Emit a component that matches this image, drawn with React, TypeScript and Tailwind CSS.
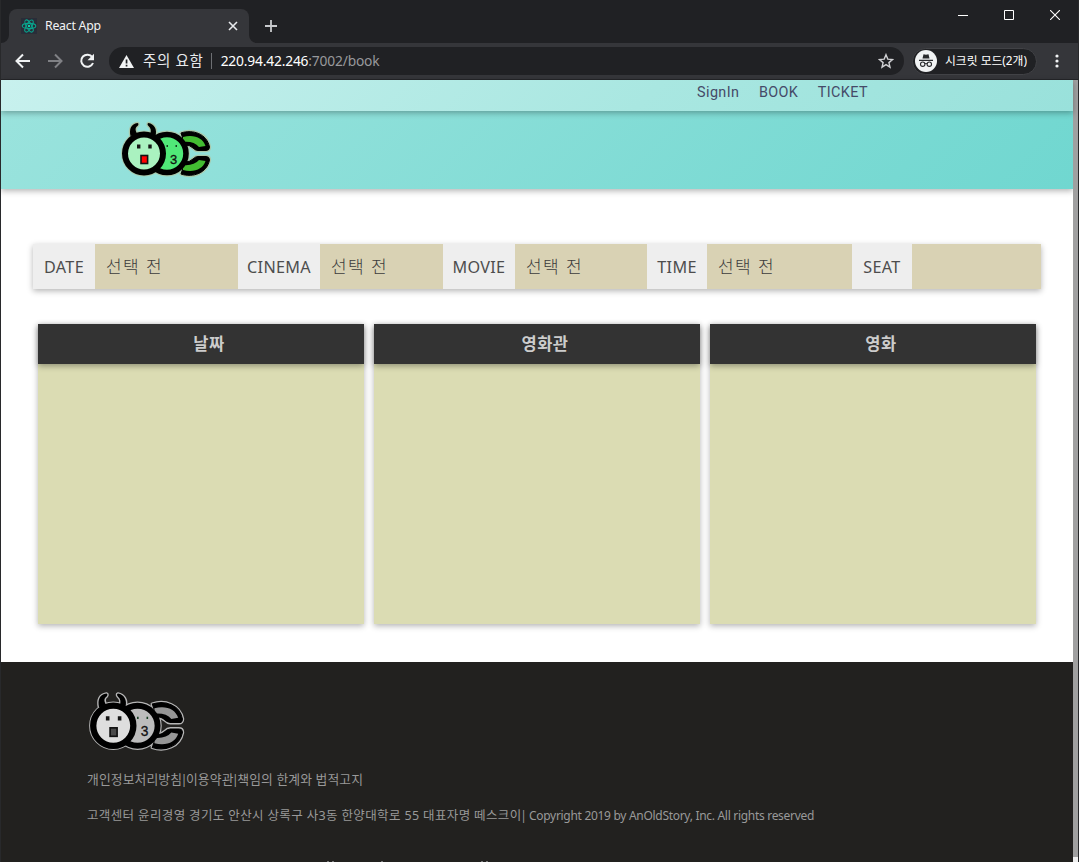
import React from "react";

const KR = "font-['Noto_Sans','Noto_Sans_CJK_KR',sans-serif]";

function Logo({ mono = false, className }: { mono?: boolean; className: string }) {
  const face = mono ? "#dedede" : "#aaf2c0";
  const body = mono ? "#bcbcbc" : "#50e878";
  const tail = mono ? "#969696" : "#43bd32";
  const mouth = mono ? "#4a4a4a" : "#ff0000";
  const glow = mono ? "#b5b5b5" : "#a9c9ac";
  const horns = "M9.500 15C8 8 10 3 16.500 2C18 2.500 17.500 4 16.500 5C13.500 7 14.500 10 16.500 13.500zM34.500 15C36.500 8 33 3 27.500 2C26 2.500 26.500 4 27.500 5C30 7 30.500 10 29 13.500z";
  const claws = "M60 12C72 8 86 13 88.500 26Q88.500 29.500 85 29.500H77Q74.500 29.500 72 27Q69 24 64 24zM60 53C72 57 86 52 88.500 39Q88.500 35.500 85 35.500H77Q74.500 35.500 72 38Q69 41 64 41z";
  return (
    <svg viewBox="0 0 90 56" className={className} fill="none">
      <g stroke={glow} strokeLinecap="round" strokeLinejoin="round">
        <path d={horns} strokeWidth="2.600" />
        <path d={claws} strokeWidth="3.400" />
        <circle cx="46" cy="32.500" r="21.600" strokeWidth="2.600" />
        <circle cx="23" cy="32.500" r="21.600" strokeWidth="2.600" />
      </g>
      <path d={horns} fill="#000" />
      <path d={claws} fill="#000" stroke="#000" />
      <path d="M62 16C73 13 82 17 84.500 25L78 26Q73 20 62 21zM62 49C73 52 82 48 84.500 40L78 39Q73 45 62 44z" fill={tail} />
      <circle cx="46" cy="32.500" r="19" fill={body} stroke="#000" strokeWidth="5.600" />
      <circle cx="23" cy="32.500" r="19" fill={face} stroke="#000" strokeWidth="6" />
      <path d="M16 23.500h3.400v4H16zM27.300 23.500h3.400v4h-3.400z" fill="#151515" />
      <path d="M45.500 24h1.500v2h-1.500zM54.500 24h1.500v2h-1.500z" fill="#173f22" />
      <rect x="20" y="34.500" width="6.600" height="8" fill={mouth} stroke="#111" strokeWidth="1.600" />
      <text x="49" y="42.500" fontSize="13" fill="#111" stroke="#111" strokeWidth=".3" fontFamily="Liberation Sans, sans-serif">3</text>
    </svg>
  );
}

function ReactMark() {
  return (
    <svg viewBox="0 0 16 16" className="h-4 w-4 bg-[#292d38]" fill="none" stroke="#09a58d" strokeWidth="1.1">
      <ellipse cx="8" cy="8" rx="6.8" ry="2.6" />
      <ellipse cx="8" cy="8" rx="6.8" ry="2.6" transform="rotate(60 8 8)" />
      <ellipse cx="8" cy="8" rx="6.8" ry="2.6" transform="rotate(120 8 8)" />
      <circle cx="8" cy="8" r="1.2" fill="#10d0ae" stroke="none" />
    </svg>
  );
}

function TabStrip() {
  return (
    <div className="flex h-[43px] items-end bg-[#202124]">
      <div className="flex h-[34px] w-[248px] items-end">
        <svg viewBox="0 0 8 8" className="h-2 w-2 shrink-0"><path d="M8 0v8H0A8 8 0 0 0 8 0" fill="#35363a" /></svg>
        <div className="flex h-[34px] w-[240px] items-center rounded-t-lg bg-[#35363a] pl-3">
          <ReactMark />
          <span className="ml-2 text-[12.3px] tracking-[-0.25px] text-[#f1f3f4]">React App</span>
          <svg viewBox="0 0 10 10" className="mr-[11px] ml-auto h-[10px] w-[10px]" stroke="#e8eaed" strokeWidth="1.6"><path d="M1 1l8 8M9 1L1 9" /></svg>
        </div>
      </div>
      <svg viewBox="0 0 8 8" className="h-2 w-2 shrink-0"><path d="M0 0v8h8A8 8 0 0 1 0 0" fill="#35363a" /></svg>
      <svg viewBox="0 0 12 12" className="mb-[11px] ml-2 h-3 w-3" stroke="#c8cacd" strokeWidth="1.8"><path d="M6 0v12M0 6h12" /></svg>
      <div className="mr-[18px] mb-[23px] ml-auto flex items-center gap-[36px]">
        <svg viewBox="0 0 10 10" className="h-[10px] w-[10px]" stroke="#fff"><path d="M0 5.5h10" /></svg>
        <svg viewBox="0 0 10 10" className="h-[10px] w-[10px]" stroke="#fff" fill="none"><path d="M.5.5h9v9h-9z" /></svg>
        <svg viewBox="0 0 10 10" className="h-[10px] w-[10px]" stroke="#fff" strokeWidth="1.1"><path d="M0 0l10 10M10 0L0 10" /></svg>
      </div>
    </div>
  );
}

function Toolbar() {
  return (
    <div className="flex h-[37px] items-center border-b border-[#252629] bg-[#35363a] pl-[14px]">
      <svg viewBox="0 0 16 16" className="h-4 w-4" fill="none" stroke="#f1f3f4" strokeWidth="2"><path d="M15 8H2M8 1.5L1.5 8L8 14.500" /></svg>
      <svg viewBox="0 0 16 16" className="ml-4 h-4 w-4" fill="none" stroke="#808185" strokeWidth="2"><path d="M1 8h13M8 1.500L14.500 8L8 14.500" /></svg>
      <svg viewBox="0 0 16 16" className="ml-4 h-4 w-4" fill="none" stroke="#f1f3f4" strokeWidth="2"><path d="M13.300 4.200A6.100 6.100 0 1 0 14 10" /><path d="M15 .7v6.500H8.500z" fill="#f1f3f4" stroke="none" /></svg>
      <div className="ml-[14px] flex h-7 w-[795px] items-center rounded-full bg-[#202124] pl-[10px]">
        <svg viewBox="0 0 15 13" className="h-[13px] w-[15px]"><path d="M7.500 0L15 13H0z" fill="#f1f3f4" /><path d="M6.700 4.500h1.700v4H6.700zM6.700 9.700h1.700v1.700H6.700z" fill="#202124" /></svg>
        <span className="ml-[9px] text-[14.500px] tracking-[0.7px] whitespace-nowrap text-[#e8eaed]">주의 요함</span>
        <span className="mr-[9px] ml-[7px] h-4 w-px bg-[#6d6f73]" />
        <span className="text-[13.800px] tracking-[-0.18px] text-[#98999c]"><span className="text-white">220.94.42.246</span>:7002/book</span>
        <svg viewBox="0 0 16 16" className="mr-[10px] ml-auto h-4 w-4" fill="none" stroke="#d0d1d4" strokeWidth="1.400"><path d="M8 1.700l1.800 4.400 4.700.4-3.600 3.100 1.100 4.600L8 11.700l-4 2.500 1.100-4.600-3.600-3.100 4.700-.4z" /></svg>
      </div>
      <div className="ml-[8px] flex h-[27px] w-[125px] items-center rounded-full border border-[#414246] bg-[#202124] pl-[2px]">
        <svg viewBox="0 0 22 22" className="h-[22px] w-[22px] shrink-0">
          <circle cx="11" cy="11" r="11" fill="#f1f3f4" />
          <path d="M7.500 8.500L8.500 4.300L11 4.800L13.500 4.300L14.500 8.500zM4 9.800h14v1.200H4z" fill="#292a2d" />
          <g fill="none" stroke="#292a2d" strokeWidth="1.100"><circle cx="7.700" cy="14.200" r="2.200" /><circle cx="14.300" cy="14.200" r="2.200" /><path d="M9.900 14c.6-.7 1.600-.7 2.200 0" /></g>
        </svg>
        <span className="ml-2 text-[11.800px] whitespace-nowrap text-white">시크릿 모드(2개)</span>
      </div>
      <svg viewBox="0 0 4 14" className="ml-[18px] h-[14px] w-1" fill="#f1f3f4"><circle cx="2" cy="2" r="1.600" /><circle cx="2" cy="7" r="1.600" /><circle cx="2" cy="12" r="1.600" /></svg>
    </div>
  );
}

function Selection() {
  const label = "flex shrink-0 items-center justify-center bg-[#eee] pt-0.5";
  const value = "flex shrink-0 items-center bg-[#d9d2b4] pt-px pl-[11px] text-[17px] font-light tracking-[1.400px] text-[#3c3c3c]";
  return (
    <div className="mx-8 mt-[55px] flex h-[45px] w-[1008px] text-[16.200px] tracking-[0.3px] text-[#4d4d4d] shadow-[0_2px_6px_rgba(0,0,0,0.3)]">
      <div className={label + " w-[62px]"}>DATE</div>
      <div className={value + " w-[143px]"}>선택 전</div>
      <div className={label + " w-[82px]"}>CINEMA</div>
      <div className={value + " w-[123px]"}>선택 전</div>
      <div className={label + " w-[72px]"}>MOVIE</div>
      <div className={value + " w-[132px]"}>선택 전</div>
      <div className={label + " w-[60px]"}>TIME</div>
      <div className={value + " w-[145px]"}>선택 전</div>
      <div className={label + " w-[60px]"}>SEAT</div>
      <div className={value + " w-[129px]"} />
    </div>
  );
}

function Panel({ title }: { title: string }) {
  return (
    <section className="h-[300px] w-[326px] bg-[#dbdcb3] shadow-[0_2px_6px_rgba(0,0,0,0.3)]">
      <h2 className="flex h-10 items-center justify-center bg-[#333] pt-px pl-[16px] text-[16.500px] font-bold tracking-[0.5px] text-[#ccc] shadow-[0_2px_6px_rgba(0,0,0,0.35)]">{title}</h2>
    </section>
  );
}

function Bar() {
  return <span className="mx-[-1.700px]">|</span>;
}

export default function App() {
  return (
    <div className={`${KR} flex h-[862px] w-[1079px] flex-col overflow-hidden border-x border-[#28292b] bg-[#202124]`}>
      <TabStrip />
      <Toolbar />
      <div className="flex min-h-0 flex-1">
        <main className="flex w-[1072px] flex-col bg-white">
          <nav className="z-10 flex h-[31px] shrink-0 justify-end gap-[19.500px] bg-[linear-gradient(135deg,#c8f1ee,#a9e7e1_60%,#99e1db)] pt-px pr-[205px] font-['Roboto','Noto_Sans',sans-serif] text-[14.400px] leading-6 tracking-[0.400px] text-[#454a68] shadow-[0_2px_6px_rgba(0,0,0,0.3)]">
            <span>SignIn</span><span>BOOK</span><span>TICKET</span>
          </nav>
          <header className="h-[78px] shrink-0 bg-[linear-gradient(135deg,#9ae3dd,#70d7d0)] pt-[10px] pl-[120px] shadow-[0_2px_6px_rgba(0,0,0,0.3)]">
            <Logo className="h-[56px] w-[90px] overflow-visible" />
          </header>
          <Selection />
          <div className="mt-[35px] flex gap-[10px] pl-[37px]">
            <Panel title="날짜" />
            <Panel title="영화관" />
            <Panel title="영화" />
          </div>
          <footer className="mt-[38px] flex h-[200px] shrink-0 flex-col overflow-hidden bg-[#22211f] pt-[29px] pl-[86px] text-[#999]">
            <Logo mono className="ml-[2px] h-[60px] w-[95px] overflow-visible" />
            <p className="mt-[18px] text-[12.800px] leading-5 tracking-[0.12px]">개인정보처리방침<Bar />이용약관<Bar />책임의 한계와 법적고지</p>
            <p className="mt-[17px] flex text-[12.500px] leading-5 whitespace-nowrap">
              <span className="w-[435px] tracking-[0.360px]">고객센터 윤리경영 경기도 안산시 상록구 사3동 한양대학로 55 대표자명 떼스크이</span>
              <span className="w-[7px] text-[12px]"><Bar /></span>
              <span className="text-[12px] tracking-[-0.3px]">Copyright 2019 by AnOldStory, Inc. All rights reserved</span>
            </p>
            <div className="mt-auto ml-[240px] flex h-px shrink-0">
              <i className="w-[2px] bg-[#777]" />
              <i className="ml-[3px] w-[2px] bg-[#777]" />
              <i className="ml-[47px] w-[2px] bg-[#777]" />
              <i className="ml-[98px] w-[2px] bg-[#777]" />
              <i className="ml-[3px] w-[2px] bg-[#777]" />
            </div>
          </footer>
        </main>
        <div className="flex w-[5px] flex-col justify-end bg-[#a0a0a0]"><div className="h-[5px] bg-[#eee]" /></div>
      </div>
    </div>
  );
}
